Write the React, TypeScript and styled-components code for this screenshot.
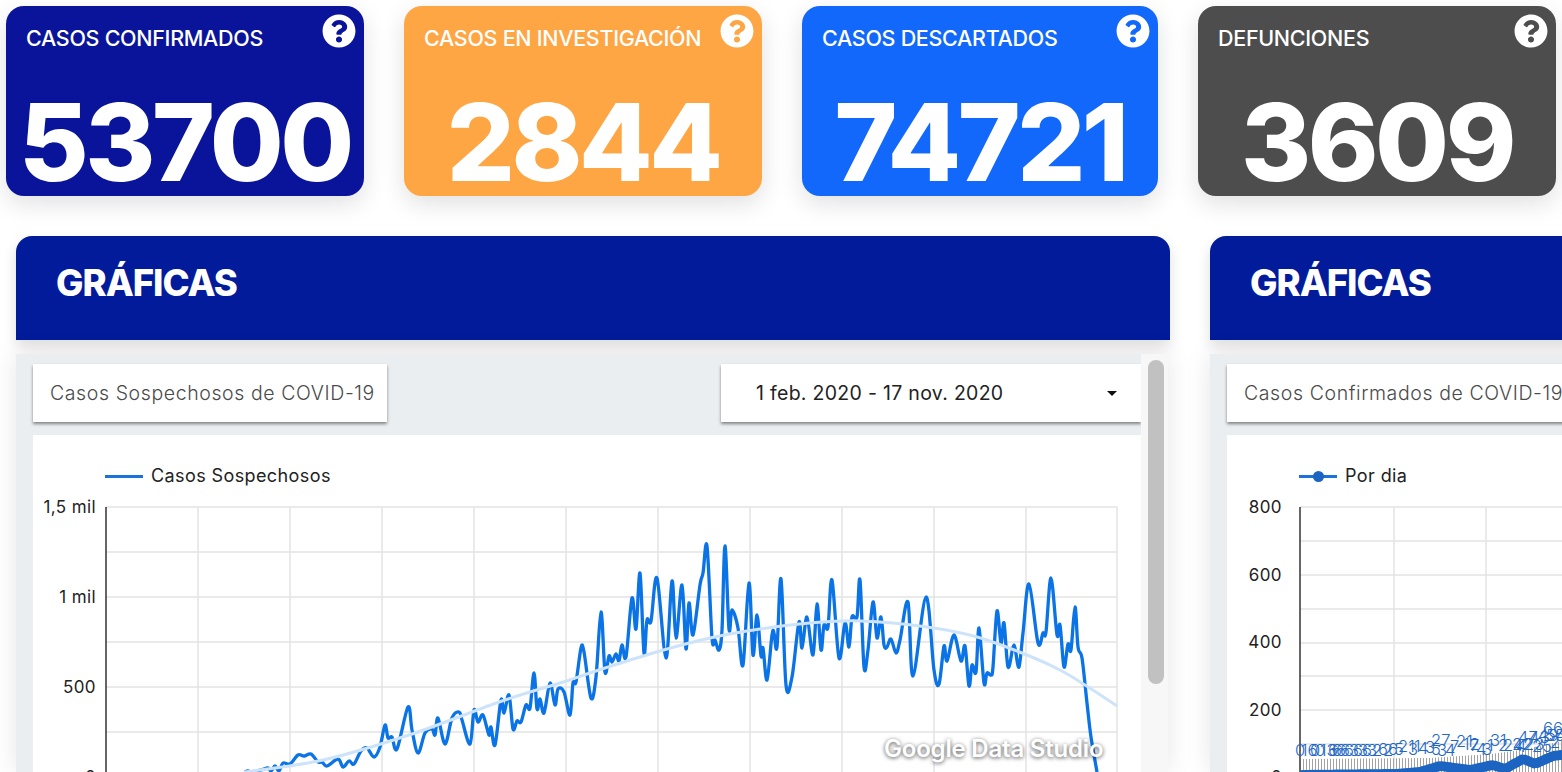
import { createGlobalStyle, styled } from 'styled-components';
import { FaQuestionCircle } from 'react-icons/fa';

type Pt = [number, number];

const suspected: Pt[] = [
  [245, 772], [248, 771], [252, 772], [261, 770], [268, 768], [271, 771], [275, 766], [279, 771],
  [283, 763], [290, 764], [298, 755], [304, 756], [311, 754], [318, 762], [322, 762], [327, 766],
  [338, 759], [343, 767], [349, 761], [354, 764], [361, 751], [367, 748], [374, 757], [380, 747],
  [385, 725], [388, 738], [392, 737], [397, 749], [408, 707], [412, 730], [418, 753], [425, 733],
  [432, 729], [435, 735], [438, 718], [445, 744], [452, 718], [459, 712], [462, 720], [470, 744],
  [474, 710], [478, 722], [483, 715], [489, 735], [491, 727], [495, 745], [501, 700], [504, 713],
  [509, 695], [513, 729], [517, 721], [521, 722], [526, 705], [530, 708], [534, 673], [537, 709],
  [540, 699], [544, 713], [550, 683], [555, 705], [558, 689], [564, 692], [570, 715], [573, 683],
  [576, 682], [581, 648], [584, 652], [591, 698], [596, 677], [601, 612], [605, 672], [609, 656],
  [612, 662], [616, 654], [619, 661], [622, 645], [626, 657], [632, 598], [636, 629], [640, 573],
  [644, 653], [647, 620], [651, 621], [657, 578], [666, 658], [672, 581], [676, 638], [682, 585],
  [686, 649], [689, 603], [693, 635], [700, 585], [703, 573], [707, 546], [712, 638], [715, 640],
  [719, 650], [722, 630], [725, 546], [729, 629], [732, 610], [738, 628], [743, 665], [749, 583],
  [753, 655], [757, 615], [761, 656], [763, 648], [767, 680], [772, 635], [774, 633], [777, 647],
  [781, 579], [786, 685], [792, 677], [799, 622], [802, 648], [807, 617], [813, 655], [817, 604],
  [821, 650], [824, 625], [828, 627], [832, 580], [839, 658], [845, 623], [849, 647], [852, 617],
  [857, 617], [860, 580], [864, 667], [868, 650], [873, 602], [877, 638], [881, 617], [884, 645],
  [887, 647], [891, 639], [896, 653], [900, 640], [908, 602], [913, 676], [926, 597], [934, 670],
  [939, 684], [944, 646], [947, 661], [954, 635], [961, 661], [965, 646], [969, 686], [972, 665],
  [976, 672], [979, 628], [984, 683], [987, 673], [991, 675], [993, 667], [997, 611], [1001, 643],
  [1004, 623], [1008, 667], [1013, 647], [1015, 648], [1019, 667], [1023, 633], [1029, 584],
  [1038, 643], [1043, 633], [1046, 632], [1051, 578], [1057, 635], [1060, 625], [1064, 667],
  [1068, 644], [1071, 650], [1075, 607], [1078, 647], [1082, 658], [1087, 703], [1091, 737],
  [1097, 772],
];

const trend: Pt[] = [
  [245, 772], [323, 760], [409, 735], [502, 701], [560, 683], [605, 668], [660, 651], [710, 638],
  [760, 629], [810, 623], [860, 621], [927, 627], [977, 637], [1027, 655], [1060, 670], [1085, 685],
  [1117, 706],
];

const perDay: Pt[] = [
  [1300, 775], [1395, 774], [1420, 772], [1440, 766], [1455, 768], [1470, 770], [1493, 765],
  [1505, 769], [1523, 759], [1535, 764], [1553, 756], [1562, 755],
];

const tickTops: Pt[] = [[1300, 759], [1430, 758], [1490, 754], [1520, 750], [1562, 741]];

const xGridLeft = [198, 290, 382, 474, 566, 658, 750, 842, 934, 1026, 1117];
const yGridLeft = [507, 552, 597, 642, 687, 732];
const yLabelsLeft: [string, number][] = [['1,5 mil', 507], ['1 mil', 597], ['500', 687], ['0', 777]];

const xGridRight = [1394, 1486];
const yGridRight = [507, 541, 575, 609, 643, 676, 710, 744];
const yLabelsRight: [string, number][] = [['800', 507], ['600', 575], ['400', 642], ['200', 710], ['0', 777]];

// label, x, baseline
const dayLabels: [string, number, number][] = [
  ['0', 1295, 756], ['16', 1301, 756], ['0', 1310, 756], ['0', 1315, 756], ['13', 1320, 756],
  ['6', 1328, 756], ['6', 1332, 756], ['6', 1336, 756], ['6', 1340, 756], ['6', 1344, 756],
  ['3', 1349, 756], ['6', 1353, 756], ['3', 1358, 756], ['6', 1362, 756], ['3', 1367, 756],
  ['2', 1372, 756], ['6', 1378, 755], ['2', 1383, 756], ['6', 1388, 755], ['5', 1394, 755],
  ['21', 1398, 752], ['3', 1408, 755], ['1', 1414, 752], ['4', 1418, 754], ['3', 1425, 753],
  ['5', 1431, 755], ['3', 1437, 756], ['27', 1431, 746], ['4', 1445, 756], ['7', 1450, 752],
  ['21', 1456, 747], ['12', 1463, 750], ['7', 1470, 751], ['4', 1476, 755], ['3', 1482, 755],
  ['1', 1487, 751], ['31', 1490, 746], ['2', 1498, 751], ['24', 1503, 751], ['22', 1512, 750],
  ['4', 1516, 752], ['23', 1524, 750], ['47', 1518, 743], ['25', 1532, 752], ['43', 1529, 743],
  ['49', 1538, 741], ['54', 1546, 741], ['66', 1543, 734], ['25', 1550, 748], ['57', 1555, 741],
];

const lerp = (pts: Pt[], x: number) => {
  const next = pts.findIndex((p) => p[0] >= x);
  if (next <= 0) return pts[next === 0 ? 0 : pts.length - 1][1];
  const [x0, y0] = pts[next - 1];
  const [x1, y1] = pts[next];
  return y0 + ((y1 - y0) * (x - x0)) / (x1 - x0);
};

const smooth = (pts: Pt[]) => {
  let d = `M${pts[0][0]} ${pts[0][1]}`;
  for (let i = 0; i < pts.length - 1; i++) {
    const p0 = pts[Math.max(i - 1, 0)];
    const p1 = pts[i];
    const p2 = pts[i + 1];
    const p3 = pts[Math.min(i + 2, pts.length - 1)];
    const c1x = p1[0] + (p2[0] - p0[0]) / 6;
    const c1y = p1[1] + (p2[1] - p0[1]) / 6;
    const c2x = p2[0] - (p3[0] - p1[0]) / 6;
    const c2y = p2[1] - (p3[1] - p1[1]) / 6;
    d += `C${c1x.toFixed(1)} ${c1y.toFixed(1)} ${c2x.toFixed(1)} ${c2y.toFixed(1)} ${p2[0]} ${p2[1]}`;
  }
  return d;
};

const days = Array.from({ length: 88 }, (_, i) => 1303 + i * 3);

const cards = [
  { title: 'CASOS CONFIRMADOS', value: '53700', color: '#0a149b' },
  { title: 'CASOS EN INVESTIGACIÓN', value: '2844', color: '#fea544' },
  { title: 'CASOS DESCARTADOS', value: '74721', color: '#1168fb' },
  { title: 'DEFUNCIONES', value: '3609', color: '#4d4d4d' },
];

const App = () => (
  <>
    <GlobalStyle />
    <Page>
      <CardGrid>
        {cards.map((card) => (
          <Card key={card.title} $color={card.color}>
            <CardHeader>
              <CardTitle>{card.title}</CardTitle>
              <HelpIcon />
            </CardHeader>
            <CardValue>{card.value}</CardValue>
          </Card>
        ))}
      </CardGrid>

      <PanelRow>
        <Panel>
          <PanelHeader>GRÁFICAS</PanelHeader>
          <Report>
            <ReportBody>
              <Controls>
                <TitleBox>Casos Sospechosos de COVID-19</TitleBox>
                <DateBox>
                  1 feb. 2020 - 17 nov. 2020
                  <Caret />
                </DateBox>
              </Controls>
              <ChartCard>
                <Legend>
                  <LegendLine />
                  Casos Sospechosos
                </Legend>
                <ChartSvg viewBox="33 435 1108 337">
                  {xGridLeft.map((x) => (
                    <line key={x} x1={x} x2={x} y1={507} y2={772} stroke="#e3e3e3" strokeWidth="1.5" />
                  ))}
                  {yGridLeft.map((y) => (
                    <line key={y} x1={106} x2={1117} y1={y} y2={y} stroke="#e3e3e3" strokeWidth="1.5" />
                  ))}
                  <line x1={106} x2={106} y1={507} y2={772} stroke="#333" strokeWidth="1.5" />
                  {yLabelsLeft.map(([label, y]) => (
                    <AxisLabel key={label} x={96} y={y + 6}>{label}</AxisLabel>
                  ))}
                  <path d={smooth(suspected)} fill="none" stroke="#0a73e6" strokeWidth="3.3" strokeLinejoin="round" />
                  <path d={smooth(trend)} fill="none" stroke="#cde3fa" strokeWidth="3" />
                </ChartSvg>
                <Watermark>Google Data Studio</Watermark>
              </ChartCard>
            </ReportBody>
            <ScrollTrack>
              <ScrollThumb />
            </ScrollTrack>
          </Report>
        </Panel>

        <Panel>
          <PanelHeader>GRÁFICAS</PanelHeader>
          <Report>
            <ReportBody>
              <Controls>
                <TitleBox>Casos Confirmados de COVID-19</TitleBox>
              </Controls>
              <ChartCard>
                <Legend>
                  <LegendLine>
                    <LegendDot />
                  </LegendLine>
                  Por dia
                </Legend>
                <ChartSvg viewBox="1227 435 1108 337">
                  {xGridRight.map((x) => (
                    <line key={x} x1={x} x2={x} y1={507} y2={772} stroke="#e3e3e3" strokeWidth="1.5" />
                  ))}
                  {yGridRight.map((y) => (
                    <line key={y} x1={1300} x2={1562} y1={y} y2={y} stroke="#e3e3e3" strokeWidth="1.5" />
                  ))}
                  {days.map((x) => (
                    <line key={x} x1={x + 0.5} x2={x + 0.5} y1={lerp(tickTops, x)} y2={772} stroke="#a2a2a2" />
                  ))}
                  <line x1={1300} x2={1300} y1={507} y2={772} stroke="#333" strokeWidth="1.5" />
                  {yLabelsRight.map(([label, y]) => (
                    <AxisLabel key={label} x={1282} y={y + 6}>{label}</AxisLabel>
                  ))}
                  {dayLabels.map(([label, x, y]) => (
                    <DayLabel key={`${label}-${x}`} x={x} y={y}>{label}</DayLabel>
                  ))}
                  {days.map((x) => (
                    <circle key={x} cx={x} cy={lerp(perDay, x)} r="5" fill="#1b64c2" />
                  ))}
                </ChartSvg>
              </ChartCard>
            </ReportBody>
          </Report>
        </Panel>
      </PanelRow>
    </Page>
  </>
);

export default App;

const GlobalStyle = createGlobalStyle`
  html, body {
    margin: 0;
    height: 100%;
    overflow: hidden;
    background: #fff;
    font-family: Inter, "Liberation Sans", sans-serif;
  }
`;

const Page = styled.div`
  width: 1562px;
  height: 772px;
  overflow: hidden;
  box-sizing: border-box;
  padding: 6px 6px 0;
`;

const CardGrid = styled.div`
  display: grid;
  grid-template-columns: 358px 358px 356px 358px;
  gap: 40px;
`;

const Card = styled.div<{ $color: string }>`
  height: 190px;
  box-sizing: border-box;
  padding: 8px 8px 0 20px;
  border-radius: 18px;
  background: ${({ $color }) => $color};
  box-shadow: 0 8px 24px rgba(0, 0, 0, 0.12);
  color: #fff;
`;

const CardHeader = styled.div`
  display: flex;
  justify-content: space-between;
  align-items: flex-start;
`;

const CardTitle = styled.div`
  margin-top: 12px;
  font-size: 21.5px;
  line-height: 25px;
  font-weight: 500;
  letter-spacing: -0.3px;
`;

const HelpIcon = styled(FaQuestionCircle)`
  width: 34px;
  height: 34px;
  color: #fff;
`;

const CardValue = styled.div`
  margin: 36px -8px 0 -20px;
  text-align: center;
  font-size: 107px;
  line-height: 110px;
  font-weight: 800;
  letter-spacing: -3.5px;
`;

const PanelRow = styled.div`
  display: flex;
  gap: 40px;
  margin: 40px 0 0 10px;
`;

const Panel = styled.section`
  flex: 0 0 1154px;
`;

const PanelHeader = styled.h2`
  margin: 0;
  height: 104px;
  box-sizing: border-box;
  padding: 0 40px 10px;
  display: flex;
  align-items: center;
  border-radius: 16px 16px 0 0;
  background: #021b9b;
  box-shadow: 0 6px 14px rgba(0, 0, 0, 0.13);
  color: #fff;
  font-size: 36.5px;
  font-weight: 800;
  letter-spacing: -1px;
`;

const Report = styled.div`
  display: flex;
  width: 1152px;
  margin-top: 14px;
  box-shadow: 0 0 24px rgba(0, 0, 0, 0.1);
`;

const ReportBody = styled.div`
  flex: 1;
  min-width: 0;
  background: #ebeef1;
  padding: 10px 0 0 17px;
`;

const Controls = styled.div`
  display: flex;
  justify-content: space-between;
  height: 58px;
`;

const TitleBox = styled.div`
  display: flex;
  align-items: center;
  box-sizing: border-box;
  width: 354px;
  padding-left: 17px;
  white-space: nowrap;
  background: #fff;
  box-shadow: 0 2px 3px rgba(0, 0, 0, 0.45);
  color: #4a4a4a;
  font-size: 19.5px;
  font-weight: 300;
  letter-spacing: 0.6px;
`;

const DateBox = styled.div`
  display: flex;
  align-items: center;
  justify-content: space-between;
  box-sizing: border-box;
  width: 420px;
  padding: 0 24px 0 35px;
  background: #fff;
  box-shadow: 0 2px 3px rgba(0, 0, 0, 0.45);
  color: #222;
  font-size: 19.5px;
  letter-spacing: 0.3px;
`;

const Caret = styled.span`
  width: 0;
  height: 0;
  border-left: 5px solid transparent;
  border-right: 5px solid transparent;
  border-top: 5px solid #111;
`;

const ChartCard = styled.div`
  position: relative;
  margin-top: 13px;
  height: 337px;
  background: #fff;
`;

const Legend = styled.div`
  position: absolute;
  top: 29px;
  left: 72px;
  display: flex;
  align-items: center;
  gap: 8px;
  color: #222;
  font-size: 18px;
  line-height: 24px;
  letter-spacing: 0.4px;
`;

const LegendLine = styled.span`
  position: relative;
  width: 38px;
  height: 3px;
  background: #1b72d8;
`;

const LegendDot = styled.span`
  position: absolute;
  top: -4px;
  left: 14px;
  width: 11px;
  height: 11px;
  border-radius: 50%;
  background: #1b64c2;
`;

const ChartSvg = styled.svg`
  display: block;
  width: 1108px;
  height: 337px;
`;

const AxisLabel = styled.text`
  font-family: Inter, "Liberation Sans", sans-serif;
  font-size: 17px;
  letter-spacing: 0.4px;
  fill: #222;
  text-anchor: end;
`;

const DayLabel = styled.text`
  font-family: Inter, "Liberation Sans", sans-serif;
  font-size: 16.5px;
  font-weight: 300;
  fill: #1f68c6;
`;

const Watermark = styled.div`
  position: absolute;
  left: 851px;
  top: 299px;
  color: #fff;
  font-size: 24px;
  line-height: 30px;
  font-weight: 600;
  letter-spacing: -0.2px;
  text-shadow: 0 1px 4px rgba(0, 0, 0, 0.7);
`;

const ScrollTrack = styled.div`
  flex: 0 0 27px;
  box-sizing: border-box;
  padding: 6px 4px 0 7px;
  background: #f7f7f7;
`;

const ScrollThumb = styled.div`
  height: 324px;
  border-radius: 8px;
  background: #c1c1c1;
`;
